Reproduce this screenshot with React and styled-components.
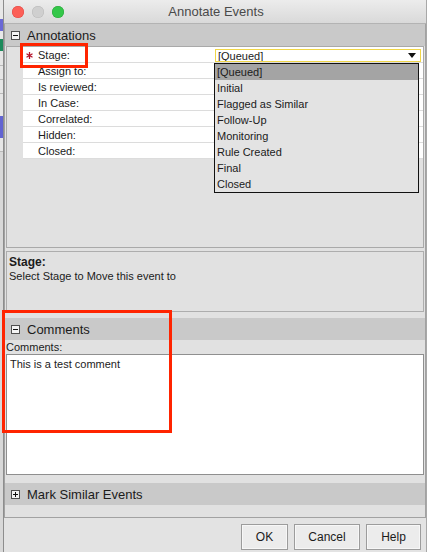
import React from "react";
import styled, { createGlobalStyle } from "styled-components";

const GlobalStyle = createGlobalStyle`
  *, *::before, *::after {
    box-sizing: border-box;
  }
  html, body {
    margin: 0;
    padding: 0;
    background: #dedede;
  }
  body {
    font-family: "Liberation Sans", Arial, sans-serif;
    font-size: 11px;
    color: #1b1b1b;
  }
`;

const STAGES = [
  "[Queued]",
  "Initial",
  "Flagged as Similar",
  "Follow-Up",
  "Monitoring",
  "Rule Created",
  "Final",
  "Closed",
];

const FIELDS = [
  { label: "Stage:", required: true },
  { label: "Assign to:" },
  { label: "Is reviewed:" },
  { label: "In Case:" },
  { label: "Correlated:" },
  { label: "Hidden:" },
  { label: "Closed:" },
];

const Screen = styled.div`
  position: relative;
  width: 427px;
  height: 552px;
  overflow: hidden;
  display: flex;
  background: #e4e4e4;
`;

// bits of the window that sits behind the dialog
const Behind = styled.div`
  width: ${(p) => p.$w}px;
  display: flex;
  flex-direction: column;
  background: #e6e6e6;
`;

const BehindBlock = styled.div`
  height: ${(p) => p.$h}px;
  flex-shrink: 0;
  background: ${(p) => p.$c};
  border-bottom: ${(p) => (p.$line ? "1px solid #b9b9b9" : "none")};
`;

const Window = styled.div`
  flex: 1;
  display: flex;
  flex-direction: column;
  border-left: 1px solid #8d8d8d;
  border-right: 1px solid #a8a8a8;
  background: #e3e3e3;
`;

const TitleBar = styled.div`
  position: relative;
  height: 24px;
  flex-shrink: 0;
  display: flex;
  align-items: center;
  justify-content: center;
  background: linear-gradient(#ececec, #d9d9d9);
  border-bottom: 1px solid #b3b3b3;
`;

const Lights = styled.div`
  position: absolute;
  left: 8px;
  top: 6px;
  display: flex;
  gap: 8px;
`;

const Light = styled.span`
  width: 12px;
  height: 12px;
  border-radius: 50%;
  background: ${(p) => p.$c};
  box-shadow: inset 0 0 0 0.5px ${(p) => p.$edge};
`;

const Title = styled.div`
  font-size: 13px;
  color: #4a4a4a;
  margin-left: 2px;
`;

const MainPane = styled.div`
  height: 494px;
  flex-shrink: 0;
  display: flex;
  flex-direction: column;
  border: 1px solid #a2a2a2;
  border-top: none;
  background: #e1e1e1;
`;

const SectionHeader = styled.div`
  height: 22px;
  flex-shrink: 0;
  display: flex;
  align-items: center;
  gap: 7px;
  padding: 1px 0 0 6px;
  margin-top: ${(p) => p.$top || 0}px;
  background: #c9c9c9;
  font-size: 13px;
  color: #1b1b1b;
`;

const PropPanel = styled.div`
  position: relative;
  height: 202px;
  flex-shrink: 0;
  margin: 0 1px;
  border: 1px solid #a9a9a9;
  background: #e1e1e1;
`;

const Rows = styled.div`
  margin-left: 16px;
  display: flex;
  flex-direction: column;
`;

const Row = styled.div`
  height: 16px;
  display: grid;
  grid-template-columns: 191px 1fr;
  align-items: center;
  background: #ffffff;
  border-bottom: 1px solid #dcdcdc;
`;

const Label = styled.div`
  display: flex;
  align-items: center;
  gap: 5px;
  padding: 1px 0 0 3px;
  font-size: 11px;
`;

const Star = styled.span`
  width: 7px;
  display: flex;
`;

const Combo = styled.div`
  height: 13px;
  margin: 1px 2px 0 1px;
  display: flex;
  justify-content: space-between;
  align-items: flex-start;
  border: 1px solid #f0d648;
  background: #ffffff;
  overflow: hidden;
  font-size: 11px;
  line-height: 11px;
  padding: 1px 4px 0 2px;
`;

const Arrow = styled.span`
  margin-top: 2px;
  width: 0;
  height: 0;
  border-left: 4.5px solid transparent;
  border-right: 4.5px solid transparent;
  border-top: 5px solid #111;
`;

const DropList = styled.ul`
  position: absolute;
  left: 207px;
  top: 16px;
  width: 205px;
  margin: 0;
  padding: 0;
  list-style: none;
  border: 1px solid #111;
  background: #e3e3e3;
  z-index: 2;
`;

const DropItem = styled.li`
  height: 16px;
  line-height: 17px;
  padding-left: 2px;
  font-size: 11px;
  background: ${(p) => (p.$active ? "#a4a4a4" : "transparent")};
`;

const DescPanel = styled.div`
  height: 61px;
  flex-shrink: 0;
  margin: 3px 1px 0;
  padding: 3px 2px;
  border: 1px solid #adadad;
  background: #e1e1e1;
  font-size: 11px;
  line-height: 14px;
`;

const DescTitle = styled.div`
  font-weight: bold;
  font-size: 12px;
`;

const FieldCaption = styled.div`
  height: 14px;
  flex-shrink: 0;
  line-height: 15px;
  padding-left: 1px;
  font-size: 11px;
`;

const TextBox = styled.div`
  height: 121px;
  flex-shrink: 0;
  margin: 0 1px;
  padding: 2px 3px;
  border: 1px solid #8f8f8f;
  background: #ffffff;
  font-size: 11px;
  line-height: 14px;
`;

const ButtonBar = styled.div`
  flex: 1;
  display: flex;
  justify-content: flex-end;
  align-items: flex-start;
  gap: 6px;
  padding: 6px 5px 0 0;
  background: #e3e3e3;
`;

const Button = styled.button`
  width: ${(p) => p.$w}px;
  height: 26px;
  padding: 0;
  border: 1px solid #9c9c9c;
  background: #ececec;
  box-shadow: inset 0 0 0 1px #f7f7f7;
  font-family: "Liberation Sans", Arial, sans-serif;
  font-size: 12px;
  color: #1b1b1b;
`;

const Callout = styled.div`
  position: absolute;
  left: ${(p) => p.$x}px;
  top: ${(p) => p.$y}px;
  width: ${(p) => p.$w}px;
  height: ${(p) => p.$h}px;
  border: 3px solid #ff2400;
  pointer-events: none;
  z-index: 5;
`;

const ToggleBox = ({ open }) => (
  <svg width="9" height="9" viewBox="0 0 9 9">
    <rect x="0.5" y="0.5" width="8" height="8" fill="#f4f4f4" stroke="#4f4f4f" />
    <line x1="2" y1="4.5" x2="7" y2="4.5" stroke="#111" />
    {!open && <line x1="4.5" y1="2" x2="4.5" y2="7" stroke="#111" />}
  </svg>
);

const RequiredStar = () => (
  <svg width="7" height="7" viewBox="0 0 7 7">
    <g stroke="#b4122a" strokeWidth="1.3">
      <line x1="3.5" y1="0" x2="3.5" y2="7" />
      <line x1="0.5" y1="1.8" x2="6.5" y2="5.2" />
      <line x1="0.5" y1="5.2" x2="6.5" y2="1.8" />
    </g>
  </svg>
);

const App = () => {
  return (
    <Screen>
      <GlobalStyle />
      <Behind $w={3}>
        <BehindBlock $h={19} $c="#e8e8e8" />
        <BehindBlock $h={12} $c="#6a68d6" />
        <BehindBlock $h={8} $c="#e8e8e8" />
        <BehindBlock $h={12} $c="#1c8a5b" />
        <BehindBlock $h={15} $c="#e6e6e6" $line />
        <BehindBlock $h={14} $c="#e6e6e6" $line />
        <BehindBlock $h={14} $c="#e6e6e6" $line />
        <BehindBlock $h={22} $c="#e6e6e6" />
        <BehindBlock $h={22} $c="#6264d2" />
        <BehindBlock $h={14} $c="#e6e6e6" $line />
        <BehindBlock $h={400} $c="#d8d8d8" />
      </Behind>

      <Window>
        <TitleBar>
          <Lights>
            <Light $c="#fc5f57" $edge="#df4744" />
            <Light $c="#cfcfcf" $edge="#b9b9b9" />
            <Light $c="#34c749" $edge="#2aa23a" />
          </Lights>
          <Title>Annotate Events</Title>
        </TitleBar>

        <MainPane>
          <SectionHeader>
            <ToggleBox open />
            Annotations
          </SectionHeader>

          <PropPanel>
            <Rows>
              {FIELDS.map((f, i) => (
                <Row key={f.label}>
                  <Label>
                    <Star>{f.required && <RequiredStar />}</Star>
                    {f.label}
                  </Label>
                  <div>
                    {i === 0 && (
                      <Combo>
                        [Queued]
                        <Arrow />
                      </Combo>
                    )}
                  </div>
                </Row>
              ))}
            </Rows>
            <DropList>
              {STAGES.map((s, i) => (
                <DropItem key={s} $active={i === 0}>
                  {s}
                </DropItem>
              ))}
            </DropList>
          </PropPanel>

          <DescPanel>
            <DescTitle>Stage:</DescTitle>
            Select Stage to Move this event to
          </DescPanel>

          <SectionHeader $top={6}>
            <ToggleBox open />
            Comments
          </SectionHeader>
          <FieldCaption>Comments:</FieldCaption>
          <TextBox>This is a test comment</TextBox>

          <SectionHeader $top={8}>
            <ToggleBox />
            Mark Similar Events
          </SectionHeader>
        </MainPane>

        <ButtonBar>
          <Button $w={47}>OK</Button>
          <Button $w={66}>Cancel</Button>
          <Button $w={55}>Help</Button>
        </ButtonBar>
      </Window>

      <Callout $x={20} $y={43} $w={68} $h={25} />
      <Callout $x={2} $y={310} $w={170} $h={123} />
    </Screen>
  );
};

export default App;
